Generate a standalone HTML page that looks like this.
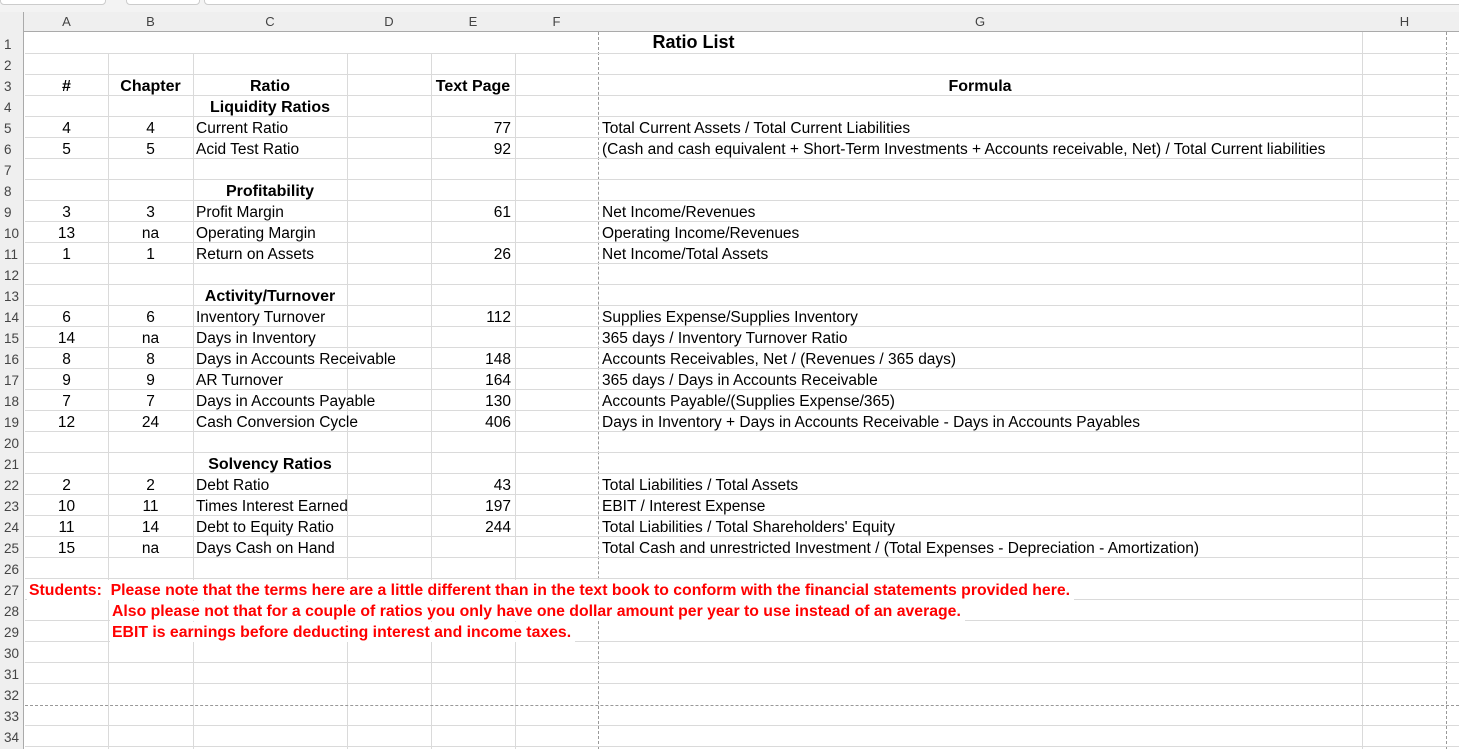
<!DOCTYPE html>
<html style="overflow:hidden;height:749px"><head><meta charset="utf-8"><style>
body{margin:0;width:1459px;height:749px;overflow:hidden;background:#fff;font-family:"Liberation Sans",Arial,sans-serif;position:relative}
.a{position:absolute}
.vl{position:absolute;top:53px;height:696px;width:1px;background:#dadada}
.hl{position:absolute;left:0;width:1459px;height:1px;background:#dadada}
.c{position:absolute;height:20px;line-height:21px;font-size:15.5px;color:#000;white-space:nowrap}
.b{font-weight:bold;font-size:16px}
.rn{position:absolute;left:0;width:24px;height:21px;line-height:24px;font-size:13.5px;color:#444;text-align:left;padding-left:4px;box-sizing:border-box}
.ch{position:absolute;top:12px;height:20px;line-height:20px;font-size:13px;color:#444;text-align:center}
.red{color:#f00;font-weight:bold;font-size:15.8px;background:#fff}
</style></head><body>
<div class="a" style="left:0;top:0;width:1459px;height:12px;background:#f3f3f3"></div>
<div class="a" style="left:0;top:-6px;width:104px;height:9px;border:1px solid #ccc;border-radius:4px;background:#fff"></div>
<div class="a" style="left:126px;top:-6px;width:72px;height:9px;border:1px solid #ccc;border-radius:4px;background:#fff"></div>
<div class="a" style="left:204px;top:-6px;width:1260px;height:9px;border:1px solid #ccc;border-radius:4px;background:#fff"></div>
<div class="a" style="left:0;top:12px;width:1459px;height:20px;background:#efefef;border-bottom:1px solid #aaa;box-sizing:border-box"></div>
<div class="a" style="left:0;top:12px;width:24px;height:737px;background:#efefef;border-right:1px solid #aaa;box-sizing:border-box"></div>
<div class="ch" style="left:25px;width:83px">A</div>
<div class="ch" style="left:108px;width:85px">B</div>
<div class="ch" style="left:193px;width:154px">C</div>
<div class="ch" style="left:347px;width:84px">D</div>
<div class="ch" style="left:431px;width:84px">E</div>
<div class="ch" style="left:515px;width:83px">F</div>
<div class="ch" style="left:598px;width:764px">G</div>
<div class="ch" style="left:1362px;width:85px">H</div>
<div class="vl" style="left:108px"></div>
<div class="vl" style="left:193px"></div>
<div class="vl" style="left:347px"></div>
<div class="vl" style="left:431px"></div>
<div class="vl" style="left:515px"></div>
<div class="vl" style="left:1362px;top:32px;height:717px"></div>
<div class="a" style="left:598px;top:32px;height:717px;width:0;border-left:1px dashed #999"></div>
<div class="a" style="left:1446px;top:32px;height:717px;width:0;border-left:1px dashed #999"></div>
<div class="a" style="left:25px;top:705px;width:1434px;height:0;border-top:1px dashed #999"></div>
<div id="rows"></div>
<script>
var h='';for(var r=1;r<=34;r++){var t=33+(r-1)*21;if(r!=32)h+='<div class="hl" style="left:25px;width:1434px;top:'+(t+20)+'px"></div>';h+='<div class="rn" style="top:'+t+'px">'+r+'</div>';}
document.getElementById('rows').outerHTML=h;
var T=function(r){return 33+(r-1)*21;};
var data=[
[3,'#','Chapter','Ratio','Text Page','Formula',1],
[5,'4','4','Current Ratio','77','Total Current Assets / Total Current Liabilities'],
[6,'5','5','Acid Test Ratio','92','(Cash and cash equivalent + Short-Term Investments + Accounts receivable, Net) / Total Current liabilities'],
[9,'3','3','Profit Margin','61','Net Income/Revenues'],
[10,'13','na','Operating Margin','','Operating Income/Revenues'],
[11,'1','1','Return on Assets','26','Net Income/Total Assets'],
[14,'6','6','Inventory Turnover','112','Supplies Expense/Supplies Inventory'],
[15,'14','na','Days in Inventory','','365 days / Inventory Turnover Ratio'],
[16,'8','8','Days in Accounts Receivable','148','Accounts Receivables, Net / (Revenues / 365 days)'],
[17,'9','9','AR Turnover','164','365 days / Days in Accounts Receivable'],
[18,'7','7','Days in Accounts Payable','130','Accounts Payable/(Supplies Expense/365)'],
[19,'12','24','Cash Conversion Cycle','406','Days in Inventory + Days in Accounts Receivable - Days in Accounts Payables'],
[22,'2','2','Debt Ratio','43','Total Liabilities / Total Assets'],
[23,'10','11','Times Interest Earned','197','EBIT / Interest Expense'],
[24,'11','14','Debt to Equity Ratio','244','Total Liabilities / Total Shareholders\' Equity'],
[25,'15','na','Days Cash on Hand','','Total Cash and unrestricted Investment / (Total Expenses - Depreciation - Amortization)']];
var o='';
data.forEach(function(d){var t=T(d[0])+1,b=d[6]?' b':'';
o+='<div class="c'+b+'" style="top:'+t+'px;left:25px;width:83px;text-align:center">'+d[1]+'</div>';
o+='<div class="c'+b+'" style="top:'+t+'px;left:108px;width:85px;text-align:center">'+d[2]+'</div>';
o+=d[6]?'<div class="c b" style="top:'+t+'px;left:193px;width:154px;text-align:center">'+d[3]+'</div>':'<div class="c" style="top:'+t+'px;left:196px">'+d[3]+'</div>';
o+=d[6]?'<div class="c b" style="top:'+t+'px;left:431px;width:84px;text-align:center">'+d[4]+'</div>':'<div class="c" style="top:'+t+'px;left:431px;width:80px;text-align:right">'+d[4]+'</div>';
o+=d[6]?'<div class="c b" style="top:'+t+'px;left:598px;width:764px;text-align:center">'+d[5]+'</div>':'<div class="c" style="top:'+t+'px;left:602px">'+d[5]+'</div>';});
[[4,'Liquidity Ratios'],[8,'Profitability'],[13,'Activity/Turnover'],[21,'Solvency Ratios']].forEach(function(s){o+='<div class="c b" style="top:'+(T(s[0])+1)+'px;left:193px;width:154px;text-align:center">'+s[1]+'</div>';});
document.write(o);
</script>
<div class="a" style="left:25px;top:33px;width:572px;height:20px;background:#fff"></div>
<div class="a" style="left:600px;top:33px;width:761px;height:20px;background:#fff"></div>
<div class="c b" style="top:32px;left:25px;width:1337px;text-align:center;font-size:18px;line-height:21px">Ratio List</div>
<div class="c red" style="top:580px;left:27px;padding-left:2px;padding-right:4px">Students:&nbsp; Please note that the terms here are a little different than in the text book to conform with the financial statements provided here.</div>
<div class="c red" style="top:601px;left:110px;padding-left:2px;padding-right:4px">Also please not that for a couple of ratios you only have one dollar amount per year to use instead of an average.</div>
<div class="c red" style="top:622px;left:110px;padding-left:2px;padding-right:4px">EBIT is earnings before deducting interest and income taxes.</div>
</body></html>
